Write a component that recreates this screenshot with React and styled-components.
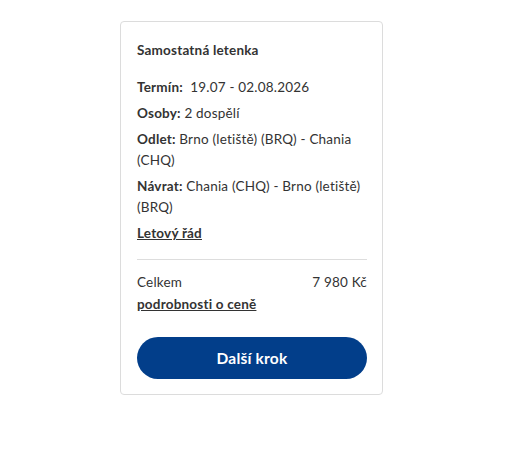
import styled, { createGlobalStyle } from "styled-components";

const Global = createGlobalStyle`
  body {
    margin: 0;
    font-family: Lato, "Noto Sans", sans-serif;
    color: #333;
    background: #fff;
  }
`;

const Page = styled.div`
  padding: 21px 0 0 120px;
`;

const Card = styled.div`
  width: 230px;
  padding: 20px 15px 15px 16px;
  border: 1px solid #dcdcdc;
  border-radius: 4px;
  background: #fff;
  font-size: 13.5px;
  letter-spacing: 0.2px;
`;

const Title = styled.h3`
  margin: 0 0 18px;
  font-size: 13.5px;
  font-weight: 700;
  line-height: 17px;
  color: #333;
`;

const Row = styled.p`
  margin: 0 0 5px;
  line-height: 21px;
  b {
    font-weight: 700;
  }
`;

const Link = styled.a`
  display: inline-block;
  margin-top: ${(p) => (p.$gap ? "1px" : "0")};
  line-height: 21px;
  font-weight: 700;
  color: #333;
  text-decoration: underline;
  cursor: pointer;
`;

const Divider = styled.hr`
  margin: 15px 0 12px;
  border: none;
  border-top: 1px solid #ddd;
`;

const Total = styled.div`
  display: flex;
  justify-content: space-between;
  line-height: 21px;
`;

const Button = styled.button`
  display: block;
  width: 100%;
  height: 42px;
  margin-top: 22px;
  border: none;
  border-radius: 21px;
  background: #023e8a;
  color: #fff;
  font-family: inherit;
  font-size: 15.5px;
  font-weight: 700;
  letter-spacing: 0.2px;
  cursor: pointer;
`;

export default function App() {
  return (
    <Page>
      <Global />
      <Card>
        <Title>Samostatná letenka</Title>
        <Row>
          <b>Termín:</b>&nbsp; 19.07 - 02.08.2026
        </Row>
        <Row>
          <b>Osoby:</b> 2 dospělí
        </Row>
        <Row>
          <b>Odlet:</b> Brno (letiště) (BRQ) - Chania (CHQ)
        </Row>
        <Row>
          <b>Návrat:</b> Chania (CHQ) - Brno (letiště) (BRQ)
        </Row>
        <Link>Letový řád</Link>
        <Divider />
        <Total>
          <span>Celkem</span>
          <span>7 980 Kč</span>
        </Total>
        <Link $gap>podrobnosti o ceně</Link>
        <Button>Další krok</Button>
      </Card>
    </Page>
  );
}
